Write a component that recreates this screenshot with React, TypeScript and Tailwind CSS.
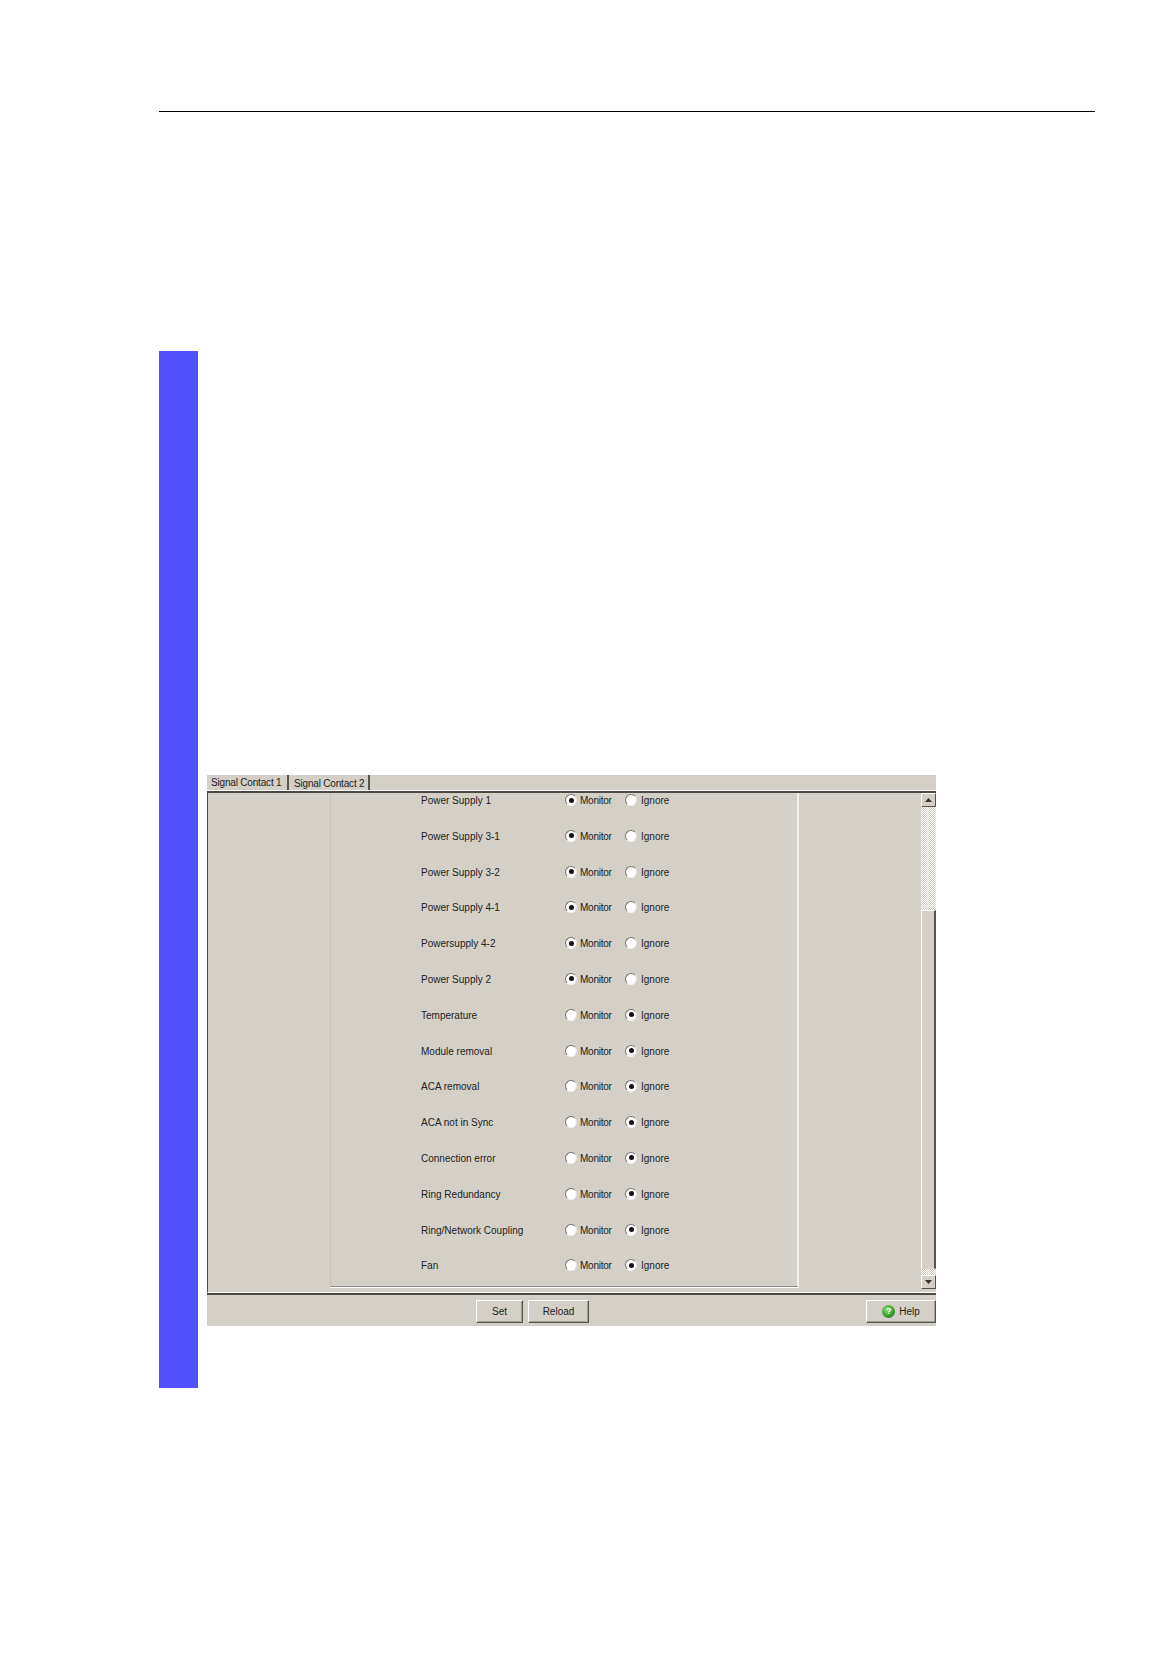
import React from "react";

const rows: [string, boolean][] = [
  ["Power Supply 1", true],
  ["Power Supply 3-1", true],
  ["Power Supply 3-2", true],
  ["Power Supply 4-1", true],
  ["Powersupply 4-2", true],
  ["Power Supply 2", true],
  ["Temperature", false],
  ["Module removal", false],
  ["ACA removal", false],
  ["ACA not in Sync", false],
  ["Connection error", false],
  ["Ring Redundancy", false],
  ["Ring/Network Coupling", false],
  ["Fan", false],
];

function Radio({ on }: { on: boolean }) {
  return (
    <span className="w-[12px] h-[12px] shrink-0 rounded-full bg-white border border-t-[#77756e] border-l-[#77756e] border-r-[#e6e4de] border-b-[#f4f3f0] flex items-center justify-center">
      {on && <span className="block w-[5px] h-[5px] rounded-full bg-[#111]" />}
    </span>
  );
}

function Btn({ w, children }: { w: string; children: React.ReactNode }) {
  return (
    <div className={`${w} h-[23px] flex items-center justify-center gap-[4px] border border-t-white border-l-white border-r-[#55534e] border-b-[#55534e] shadow-[inset_-1px_-1px_0_#a09d96] text-[10px] text-[#222]`}>
      {children}
    </div>
  );
}

function Arrow({ down }: { down?: boolean }) {
  return (
    <div className="h-[14px] flex items-center justify-center border border-t-white border-l-white border-r-[#55534e] border-b-[#55534e]">
      <svg width="7" height="4" viewBox="0 0 7 4">
        <path d={down ? "M0 0H7L3.5 4Z" : "M3.5 0L7 4H0Z"} fill="#333" />
      </svg>
    </div>
  );
}

export default function App() {
  return (
    <div
      className="w-[1174px] h-[1668px] bg-white pt-[111px] pl-[159px] overflow-hidden"
      style={{ fontFamily: '"Liberation Sans", Arial, sans-serif' }}
    >
      <div className="w-[936px] h-px bg-black" />
      <div className="flex mt-[239px]">
        <div className="w-[39px] h-[1037px] bg-[#5050ff] shrink-0" />
        <div className="pl-[9px] pt-[424px]">
          <div className="w-[729px] h-[551px] bg-[#d4d0c8] flex flex-col text-[#222] text-[10px] leading-none">
            {/* tab strip */}
            <div className="h-[16px] flex border-b border-b-white shrink-0">
              <div className="w-[82px] pl-[4px] pt-[2px] border-r-2 border-r-[#55534e] tracking-[-0.18px] leading-[11px] whitespace-nowrap">
                Signal Contact 1
              </div>
              <div className="w-[81px] pl-[5px] pt-[3px] border-r-2 border-r-[#55534e] tracking-[-0.18px] leading-[11px] whitespace-nowrap">
                Signal Contact 2
              </div>
            </div>
            {/* main */}
            <div className="h-[502px] flex border-t-2 border-t-[#4a4945] border-l border-l-[#4a4945] border-b border-b-white shrink-0">
              <div className="w-[122px] shrink-0" />
              <div className="w-[469px] shrink-0 h-[494px] border-l border-l-[#c8c4bc] border-r-2 border-r-[#f2f1ed] border-b border-b-[#8f8d86] shadow-[0_1px_0_#fff]">
                <div className="flex flex-col gap-[21.8px] pl-[90px]">
                  {rows.map(([label, monitor]) => (
                    <div key={label} className="h-[14px] flex items-center shrink-0">
                      <span className="w-[144px] pt-[2px] whitespace-nowrap">{label}</span>
                      <Radio on={monitor} />
                      <span className="w-[48px] pl-[3px] pt-[2px] tracking-[-0.25px] whitespace-nowrap">Monitor</span>
                      <Radio on={!monitor} />
                      <span className="pl-[4px] pt-[2px] whitespace-nowrap">Ignore</span>
                    </div>
                  ))}
                </div>
              </div>
              <div className="flex-1" />
              {/* scrollbar */}
              <div className="w-[15px] shrink-0 flex flex-col">
                <Arrow />
                <div className="h-[103px] bg-[repeating-conic-gradient(#d4d0c8_0_25%,#ffffff_0_50%)] bg-[length:2px_2px]" />
                <div className="h-[359px] border border-t-white border-l-white border-r-[#55534e] border-b-[#d4d0c8] border-r-2" />
                <div className="h-[6px] bg-[repeating-conic-gradient(#d4d0c8_0_25%,#ffffff_0_50%)] bg-[length:2px_2px]" />
                <Arrow down />
              </div>
            </div>
            {/* footer */}
            <div className="flex-1 border-t-2 border-t-[#4a4945] flex pt-[5px]">
              <div className="ml-[269px]">
                <Btn w="w-[47px]">Set</Btn>
              </div>
              <div className="ml-[5px]">
                <Btn w="w-[61px]">Reload</Btn>
              </div>
              <div className="ml-[277px]">
                <Btn w="w-[70px]">
                  <span className="w-[13px] h-[13px] rounded-full bg-[radial-gradient(circle_at_40%_35%,#8fdc6a,#2f9a2a_60%,#1c6f1c)] text-white text-[9px] font-bold flex items-center justify-center">
                    ?
                  </span>
                  <span>Help</span>
                </Btn>
              </div>
            </div>
          </div>
        </div>
      </div>
    </div>
  );
}
